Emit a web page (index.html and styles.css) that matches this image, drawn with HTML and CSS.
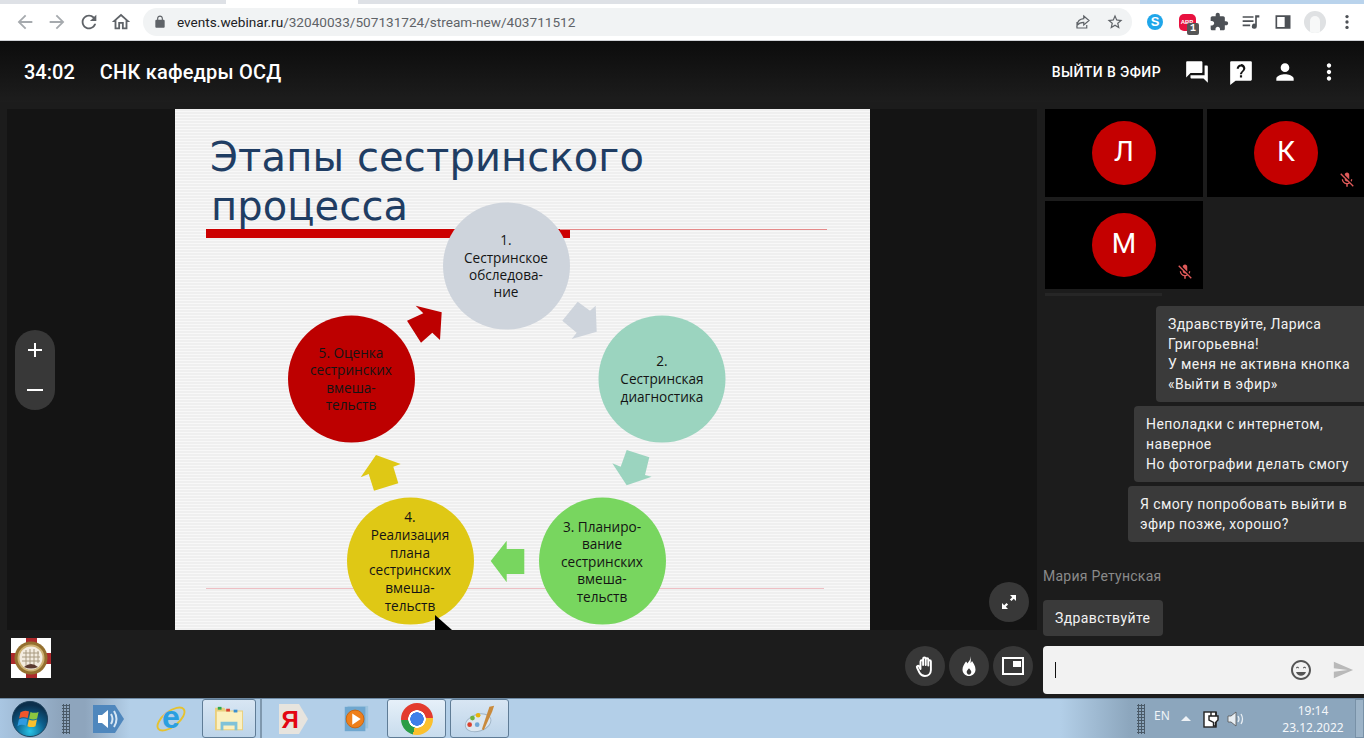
FILE: index.html
```html
<!DOCTYPE html>
<html lang="ru">
<head>
<meta charset="utf-8">
<title>СНК кафедры ОСД</title>
<link rel="stylesheet" href="styles.css">
</head>
<body>
<div class="browser">
  <div class="tabstrip"><span class="tab-a"></span><span class="tab-active"></span><span class="tab-b"></span><span class="tab-desk"></span></div>
  <div class="toolbar">
    <button class="tb-btn off"><svg viewBox="0 0 24 24"><path d="M20 11H7.83l5.59-5.59L12 4l-8 8 8 8 1.41-1.41L7.83 13H20v-2z"/></svg></button>
    <button class="tb-btn off"><svg viewBox="0 0 24 24"><path d="M12 4l-1.41 1.41L16.17 11H4v2h12.17l-5.58 5.59L12 20l8-8z"/></svg></button>
    <button class="tb-btn"><svg viewBox="0 0 24 24"><path d="M17.65 6.35C16.2 4.9 14.21 4 12 4c-4.42 0-7.99 3.58-7.99 8s3.57 8 7.99 8c3.73 0 6.84-2.55 7.73-6h-2.08c-.82 2.33-3.04 4-5.65 4-3.31 0-6-2.69-6-6s2.69-6 6-6c1.66 0 3.14.69 4.22 1.78L13 11h7V4l-2.35 2.35z"/></svg></button>
    <button class="tb-btn"><svg viewBox="0 0 24 24"><path d="M12 5.69l5 4.5V18h-2v-6H9v6H7v-7.81l5-4.5M12 3L2 12h3v8h6v-6h2v6h6v-8h3L12 3z"/></svg></button>
    <div class="omnibox">
      <svg class="lock" viewBox="0 0 24 24"><path d="M18 8h-1V6c0-2.76-2.24-5-5-5S7 3.24 7 6v2H6c-1.1 0-2 .9-2 2v10c0 1.1.9 2 2 2h12c1.1 0 2-.9 2-2V10c0-1.1-.9-2-2-2zM9 6c0-1.66 1.34-3 3-3s3 1.34 3 3v2H9V6z"/></svg>
      <span class="url"><span class="url-host">events.webinar.ru</span>/32040033/507131724/stream-new/403711512</span>
      <svg class="omni-icon share" viewBox="0 0 24 24"><path class="stroke-icon" d="M4 12v8h13v-4M13 4l7 6-7 6v-3.5c-4 0-6.500 1-9 4 .5-5 3.500-8.500 9-9z"/></svg>
      <svg class="omni-icon star" viewBox="0 0 24 24"><path d="M22 9.24l-7.19-.62L12 2 9.19 8.63 2 9.24l5.46 4.73L5.82 21 12 17.27 18.18 21l-1.63-7.03L22 9.24zM12 15.4l-3.76 2.27 1-4.28-3.32-2.88 4.38-.38L12 6.1l1.71 4.04 4.38.38-3.32 2.88 1 4.28L12 15.4z"/></svg>
    </div>
    <div class="ext-row">
      <span class="ext"><span class="skype">S</span></span>
      <span class="ext"><span class="abp">ABP</span><span class="abp-badge">1</span></span>
      <span class="ext"><svg class="ext-svg" viewBox="0 0 24 24"><path d="M20.5 11H19V7c0-1.100-.9-2-2-2h-4V3.500C13 2.120 11.880 1 10.500 1S8 2.120 8 3.500V5H4c-1.100 0-1.990.9-1.990 2v3.800H3.500c1.490 0 2.700 1.210 2.700 2.700s-1.210 2.700-2.700 2.700H2V20c0 1.100.9 2 2 2h3.800v-1.500c0-1.490 1.210-2.700 2.700-2.700 1.490 0 2.700 1.210 2.700 2.700V22H17c1.100 0 2-.9 2-2v-4h1.500c1.380 0 2.500-1.120 2.500-2.500S21.880 11 20.500 11z"/></svg></span>
      <span class="ext"><svg class="ext-svg" viewBox="0 0 24 24"><path d="M2 5h13v2H2zM2 10h13v2H2zM2 15h9v2H2zM17 4h5v2.500h-3V17a3 3 0 1 1-2-2.800z"/></svg></span>
      <span class="ext"><svg class="ext-svg" viewBox="0 0 24 24"><path fill-rule="evenodd" d="M3 4h18v16H3zM5 6v12h9V6z"/></svg></span>
      <span class="ext"><span class="profile"><span class="profile-head"></span></span></span>
      <span class="ext"><svg class="ext-svg" viewBox="0 0 24 24"><circle cx="12" cy="5.500" r="2"/><circle cx="12" cy="12" r="2"/><circle cx="12" cy="18.500" r="2"/></svg></span>
    </div>
  </div>
</div>

<div class="app">
  <header class="header">
    <span class="timer">34:02</span>
    <span class="title">СНК кафедры ОСД</span>
    <span class="go-live">ВЫЙТИ В ЭФИР</span>
    <button class="hd-btn"><svg viewBox="0 0 24 24"><path d="M21 6h-2v9H6v2c0 .55.45 1 1 1h11l4 4V7c0-.55-.45-1-1-1zm-4 6V3c0-.55-.45-1-1-1H3c-.55 0-1 .45-1 1v14l4-4h10c.55 0 1-.45 1-1z"/></svg></button>
    <button class="hd-btn"><svg viewBox="0 0 24 24"><path fill-rule="evenodd" d="M3 2h18a1 1 0 0 1 1 1v16a1 1 0 0 1-1 1H7l-5 4V3a1 1 0 0 1 1-1zm8 13v2h2v-2zm1-10c-2.200 0-4 1.800-4 4h2c0-1.100.9-2 2-2s2 .9 2 2c0 .55-.22 1.050-.59 1.410l-1.240 1.260C11.450 12.400 11 13.400 11 14h2c0-1 .45-1.600 1.170-2.330l.9-.92c.57-.57.93-1.370.93-2.250 0-2.200-1.790-4-4-4z"/></svg></button>
    <button class="hd-btn"><svg viewBox="0 0 24 24"><path d="M12 12c2.210 0 4-1.790 4-4s-1.790-4-4-4-4 1.790-4 4 1.790 4 4 4zm0 2c-2.670 0-8 1.340-8 4v2h16v-2c0-2.660-5.330-4-8-4z"/></svg></button>
    <button class="hd-btn"><svg viewBox="0 0 24 24"><path d="M12 8c1.100 0 2-.9 2-2s-.9-2-2-2-2 .9-2 2 .9 2 2 2zm0 2c-1.100 0-2 .9-2 2s.9 2 2 2 2-.9 2-2-.9-2-2-2zm0 6c-1.100 0-2 .9-2 2s.9 2 2 2 2-.9 2-2-.9-2-2-2z"/></svg></button>
  </header>

  <div class="workspace">
    <main class="main">
      <section class="stage">
        <svg class="slide" viewBox="175 109 695 521">
          <defs>
            <pattern id="stripes" width="3" height="3" patternUnits="userSpaceOnUse">
              <rect width="3" height="3" fill="#f8f8f8"/>
              <rect y="1.500" width="3" height="1" fill="#e6e6e6"/>
            </pattern>
          </defs>
          <rect x="175" y="109" width="695" height="521" fill="url(#stripes)"/>
          <text class="s-title" x="210" y="171" textLength="434">Этапы сестринского</text>
          <text class="s-title" x="211" y="220" textLength="197">процесса</text>
          <rect class="s-red" x="206" y="229" width="364" height="9"/>
          <rect class="s-thin" x="560" y="229" width="267" height="1"/>
          <rect class="s-pink" x="206" y="588" width="618" height="1"/>

          <polygon class="c1" points="577.700,301.700 590,310.700 595.700,305.700 596.700,331.700 571.700,339 576.700,332.700 562.300,320.700"/>
          <polygon class="c2" points="626.700,450 649.300,457.300 645,475 651.700,476.700 626.700,485.300 612.300,463.300 620.700,466.700"/>
          <polygon class="c3" points="490.700,561 506.700,540.700 506.700,549 524.300,549 524.300,574 506.700,574 506.700,582.300"/>
          <polygon class="c4" points="376,455 400.700,464 393.300,466.700 398.300,483.300 374,490.700 368.700,474 360.700,477.300"/>
          <polygon class="c5" points="415.700,305.700 441.700,312.300 440,340 432.300,332.700 421,342.700 407,320.700 423.300,313.300"/>

          <circle class="c1" cx="506.500" cy="266" r="63.500"/>
          <circle class="c2" cx="662" cy="379" r="63.500"/>
          <circle class="c3" cx="602.500" cy="561" r="63.500"/>
          <circle class="c4" cx="410.500" cy="561" r="63.500"/>
          <circle class="c5" cx="351.500" cy="379" r="63.500"/>

          <text class="s-text" x="506" y="245">1.</text>
          <text class="s-text" x="506" y="263">Сестринское</text>
          <text class="s-text" x="506" y="280">обследова-</text>
          <text class="s-text" x="506" y="297">ние</text>

          <text class="s-text" x="662" y="366">2.</text>
          <text class="s-text" x="662" y="384">Сестринская</text>
          <text class="s-text" x="662" y="402">диагностика</text>

          <text class="s-text" x="602" y="532">3. Планиро-</text>
          <text class="s-text" x="602" y="549">вание</text>
          <text class="s-text" x="602" y="567">сестринских</text>
          <text class="s-text" x="602" y="584">вмеша-</text>
          <text class="s-text" x="602" y="602">тельств</text>

          <text class="s-text" x="410" y="522">4.</text>
          <text class="s-text" x="410" y="540">Реализация</text>
          <text class="s-text" x="410" y="558">плана</text>
          <text class="s-text" x="410" y="575">сестринских</text>
          <text class="s-text" x="410" y="593">вмеша-</text>
          <text class="s-text" x="410" y="611">тельств</text>

          <text class="s-text" x="351" y="358">5. Оценка</text>
          <text class="s-text" x="351" y="375">сестринских</text>
          <text class="s-text" x="351" y="393">вмеша-</text>
          <text class="s-text" x="351" y="410">тельств</text>

          <polygon class="s-cursor" points="435,615 435,630 452,630"/>
        </svg>
        <div class="zoom-ctl">
          <svg viewBox="0 0 40 40"><path d="M13 19h14v2H13zM19 13h2v14h-2z"/></svg>
          <svg viewBox="0 0 40 40"><path d="M12 19h16v2H12z"/></svg>
        </div>
        <button class="round fs-btn"><svg viewBox="0 0 24 24"><path d="M13 5h6v6l-2.200-2.200-2.300 2.300-1.600-1.600 2.300-2.300zM11 19H5v-6l2.200 2.200 2.300-2.300 1.600 1.600-2.300 2.300z"/></svg></button>
      </section>
      <div class="bar">
        <svg class="logo" viewBox="0 0 40 40">
          <rect width="40" height="40" fill="#fff"/>
          <rect x="15" y="0" width="11" height="40" fill="#ad2a2c"/>
          <rect x="0" y="15" width="40" height="11" fill="#ad2a2c"/>
          <circle cx="20" cy="20" r="16.500" fill="#94702f"/>
          <circle cx="20" cy="20" r="13.500" fill="#cdb274"/>
          <circle cx="20" cy="20" r="11.500" fill="#f3ece0"/>
          <path class="logo-lines" d="M12 15h16M11 19h18M11 23h18M15 12v16M19 11v17M23 11v17M27 13v12"/>
          <path d="M13 29q7-6 14 0q-7 3-14 0z" fill="#5a3a30"/>
        </svg>
        <div class="bar-actions">
          <button class="round"><svg viewBox="0 0 24 24"><path class="hand" d="M7.500 15V7.500a1.300 1.300 0 0 1 2.600 0V11V4.800a1.300 1.300 0 0 1 2.600 0V11V5.500a1.300 1.300 0 0 1 2.600 0V11.500V7.500a1.300 1.300 0 0 1 2.600 0V16c0 3.500-2.500 6-6 6c-3 0-4.300-1.300-5.500-3.500L4 13.500c-.7-1.300 1-2.400 2-1.200z"/></svg></button>
          <button class="round"><svg viewBox="0 0 24 24"><path fill-rule="evenodd" d="M13 2c1 4-1 5-2.500 7.500C10 8.500 9.500 8 9 7.500 7.500 10 5.500 12 5.500 15.500c0 4 3.200 6.500 6.500 6.500s6.500-2.500 6.500-6.500c0-4-2.500-6.500-3.500-8.500-.5 1-1 1.500-1.500 2C14 7 14 4 13 2zM12 20.500c-1.200 0-2.300-1.100-2.300-2.600 0-1.200 1.100-2.200 2.300-3.700 1.200 1.500 2.300 2.500 2.300 3.700 0 1.500-1.100 2.600-2.300 2.600z"/></svg></button>
          <button class="round"><svg viewBox="0 0 24 24"><path fill-rule="evenodd" d="M1 3h22v18H1zM3 5v14h18V5zM12 7h8v6h-8z"/></svg></button>
        </div>
      </div>
    </main>

    <aside class="side">
      <div class="tiles">
        <div class="tile"><span class="avatar">Л</span></div>
        <div class="tile"><span class="avatar">К</span><svg class="mic" viewBox="0 0 24 24"><path d="M19 11h-1.700c0 .74-.16 1.430-.43 2.050l1.230 1.230c.56-.98.9-2.090.9-3.280zm-4.020.17c0-.06.02-.11.02-.17V5c0-1.660-1.340-3-3-3S9 3.340 9 5v.18l5.980 5.990zM4.270 3L3 4.270l6.010 6.010V11c0 1.660 1.330 3 2.990 3 .22 0 .44-.03.65-.08l1.660 1.660c-.71.33-1.500.52-2.310.52-2.760 0-5.300-2.100-5.300-5.100H5c0 3.410 2.720 6.230 6 6.720V21h2v-3.280c.91-.13 1.770-.45 2.540-.9L19.730 21 21 19.730 4.270 3z"/></svg></div>
        <div class="tile"><span class="avatar">М</span><svg class="mic" viewBox="0 0 24 24"><path d="M19 11h-1.700c0 .74-.16 1.430-.43 2.050l1.230 1.230c.56-.98.9-2.090.9-3.280zm-4.020.17c0-.06.02-.11.02-.17V5c0-1.660-1.340-3-3-3S9 3.340 9 5v.18l5.980 5.990zM4.270 3L3 4.270l6.010 6.010V11c0 1.660 1.330 3 2.990 3 .22 0 .44-.03.65-.08l1.660 1.660c-.71.33-1.500.52-2.310.52-2.760 0-5.300-2.100-5.300-5.100H5c0 3.410 2.720 6.230 6 6.720V21h2v-3.280c.91-.13 1.770-.45 2.540-.9L19.730 21 21 19.730 4.270 3z"/></svg></div>
      </div>
      <div class="tiles-scroll"></div>
      <div class="chat">
        <div class="bubble own b1">Здравствуйте, Лариса<br>Григорьевна!<br>У меня не активна кнопка<br>«Выйти в эфир»</div>
        <div class="bubble own b2">Неполадки с интернетом,<br>наверное<br>Но фотографии делать смогу</div>
        <div class="bubble own b3">Я смогу попробовать выйти в<br>эфир позже, хорошо?</div>
        <div class="author">Мария Ретунская</div>
        <div class="bubble other">Здравствуйте</div>
      </div>
      <div class="composer">
        <span class="caret"></span>
        <svg class="smile" viewBox="0 0 24 24"><path d="M11.990 2C6.470 2 2 6.480 2 12s4.470 10 9.990 10C17.520 22 22 17.520 22 12S17.520 2 11.990 2zM12 20c-4.420 0-8-3.580-8-8s3.580-8 8-8 8 3.580 8 8-3.580 8-8 8z"/><path d="M7 14h10c-.7 2.300-2.700 3.800-5 3.800S7.700 16.300 7 14zM7 10c.3-1.700 2.700-1.700 3 0l-.7.500c-.4-.9-1.200-.9-1.600 0zM14 10c.3-1.700 2.700-1.700 3 0l-.7.500c-.4-.9-1.200-.9-1.600 0z"/></svg>
        <svg class="send" viewBox="0 0 24 24"><path d="M2.010 21L23 12 2.010 3 2 10l15 2-15 2z"/></svg>
      </div>
    </aside>
  </div>
</div>

<footer class="taskbar">
  <div class="start">
    <svg viewBox="0 0 40 40">
      <defs>
        <radialGradient id="orb" cx="50%" cy="85%" r="75%"><stop offset="0" stop-color="#27c3e6"/><stop offset=".55" stop-color="#0d5f8c"/><stop offset="1" stop-color="#0b2f4c"/></radialGradient>
      </defs>
      <circle cx="20" cy="20" r="18.500" fill="url(#orb)" stroke="#1c3f5a"/>
      <path d="M10 13q4-3 9-1l-1.500 7q-5-2-9 .5z" fill="#f0562a"/>
      <path d="M20.500 12.500q4 2 8.500 0l-1.500 7q-4 2-8.500 0z" fill="#8cc63f"/>
      <path d="M8.300 20.500q4-2.500 9 -.5l-1.500 7q-5-2-9 .5z" fill="#2f9be0"/>
      <path d="M18.800 20.500q4 2 8.500 0l-1.500 7q-4 2-8.500 0z" fill="#fbc02d"/>
    </svg>
  </div>
  <div class="grip"></div>
  <div class="slot slot-sound">
    <svg viewBox="0 0 32 30"><path d="M1 1h22l9 14-9 14H1z" fill="#4f87bd"/><path d="M6 11h4l6-5v18l-6-5H6z" fill="#fff"/><path class="wave" d="M19 10q3 5 0 10M22 7q5 8 0 16"/></svg>
  </div>
  <div class="slot slot-ie">
    <svg viewBox="0 0 36 36"><ellipse class="ie-ring" cx="18" cy="18" rx="17" ry="8" transform="rotate(-38 18 18)"/><text class="ie-e" x="18" y="28">e</text></svg>
  </div>
  <div class="slot pinned active-soft slot-exp">
    <svg viewBox="0 0 34 30"><path d="M2 3h10l2 3h18v21H2z" fill="#e9cf7d"/><rect x="4" y="7" width="27" height="19" fill="#fbf0c0"/><rect x="5" y="2" width="4" height="3" fill="#2fa84f"/><rect x="14" y="4" width="4" height="3" fill="#d9412e"/><rect x="22" y="5" width="4" height="3" fill="#3b8fd0"/><path d="M8 27V18h18v9h-3v-5H11v5z" fill="#7fc2d8"/></svg>
  </div>
  <div class="sep"></div>
  <div class="slot slot-ya">
    <svg viewBox="0 0 32 32"><path d="M2 1h20l9 15-9 15H2z" fill="#e7e4de"/><text class="ya" x="13" y="25">Я</text></svg>
  </div>
  <div class="slot slot-wmp">
    <svg viewBox="0 0 32 32"><rect x="7" y="2" width="22" height="24" fill="#9cc3de"/><rect x="4" y="3" width="22" height="26" fill="#6fa7cf"/><circle cx="15" cy="16" r="9.500" fill="#ef7f1a" stroke="#c76410"/><path d="M12 10l9 6-9 6z" fill="#fff"/></svg>
  </div>
  <div class="slot pinned active slot-chrome"><span class="chrome-logo"></span></div>
  <div class="slot pinned active-soft slot-paint">
    <svg viewBox="0 0 34 34"><ellipse cx="15" cy="21" rx="14" ry="9" transform="rotate(-18 15 21)" fill="#dce7f0" stroke="#9fb4c6"/><circle cx="6" cy="23" r="2.500" fill="#d9412e"/><circle cx="9" cy="16" r="2.500" fill="#6db33f"/><circle cx="15" cy="13" r="2.500" fill="#eab308"/><circle cx="14" cy="23" r="2.500" fill="#6ea7d6"/><path d="M32 3l-5 1-8 24 2 1 9-20z" fill="#c98a3c"/></svg>
  </div>
  <div class="tray">
    <div class="grip"></div>
    <span class="lang">EN</span>
    <span class="tray-up"></span>
    <svg class="tray-plug" viewBox="0 0 20 20"><rect x="2" y="3" width="12" height="15" fill="#fff" stroke="#222" stroke-width="1.400"/><path d="M9 3v4M14 3v4M7 7h9v4l-2.500 2.500V17h-2v-3.500L7 11z" fill="#fff" stroke="#222" stroke-width="1.400"/></svg>
    <svg class="tray-vol" viewBox="0 0 20 20"><path d="M2 7h3l5-4v14l-5-4H2z" fill="#e8eef3" stroke="#555" stroke-width=".8"/><path class="tray-wave" d="M12 7q2 3 0 6M15 5q3 5 0 10"/></svg>
    <div class="clock"><span>19:14</span><span>23.12.2022</span></div>
    <div class="show-desktop"></div>
  </div>
</footer>
</body>
</html>
```

FILE: styles.css
```css
* { box-sizing: border-box; }
html, body { margin: 0; padding: 0; }
body {
  width: 1364px;
  height: 738px;
  overflow: hidden;
  display: flex;
  flex-direction: column;
  font-family: Roboto, "Noto Sans", sans-serif;
  background: #1c1c1c;
}
button { border: 0; padding: 0; background: none; display: flex; align-items: center; justify-content: center; }

/* browser chrome */
.browser { height: 41px; flex: none; background: #fff; border-bottom: 1px solid #d0d2d6; }
.tabstrip { height: 4px; display: flex; }
.tab-a { width: 226px; background: #dee1e6; }
.tab-active { width: 132px; background: #fff; }
.tab-b { width: 782px; background: #dee1e6; }
.tab-desk { flex: 1; background: #b9d3ec; }
.toolbar { height: 36px; display: flex; align-items: center; padding-left: 9px; }
.tb-btn { width: 32px; height: 32px; flex: none; }
.tb-btn svg { width: 22px; height: 22px; fill: #5f6368; }
.tb-btn.off svg { fill: #a6aaae; }
.omnibox {
  width: 989px; height: 28px; margin-left: 6px; flex: none;
  border-radius: 14px; background: #f1f3f4;
  display: flex; align-items: center; padding-left: 10px;
}
.lock { width: 14px; height: 14px; fill: #5f6368; flex: none; }
.url { margin-left: 10px; font: 13.6px/28px Roboto, sans-serif; color: #5f6368; white-space: nowrap; }
.url-host { color: #202124; }
.omni-icon { width: 18px; height: 18px; flex: none; fill: #5f6368; }
.share { margin-left: auto; }
.star { margin: 0 8px 0 14px; }
.stroke-icon { fill: none; stroke: #5f6368; stroke-width: 1.600; }
.ext-row { display: flex; margin-left: 7px; }
.ext { width: 32px; height: 32px; display: flex; align-items: center; justify-content: center; position: relative; }
.ext-svg { width: 20px; height: 20px; fill: #4d5156; }
.skype { width: 16px; height: 16px; border-radius: 50%; background: #1fa6ea; color: #fff; font: 700 13px/16px "Liberation Sans", sans-serif; text-align: center; }
.abp { width: 17px; height: 17px; border-radius: 5px; background: #e8113f; color: #fff; font: 700 6px/17px "Liberation Sans", sans-serif; text-align: center; }
.abp-badge { position: absolute; right: 4px; bottom: 3px; width: 12px; height: 12px; border-radius: 2px; background: #555; color: #fff; font: 700 10px/12px "Liberation Mono", monospace; text-align: center; }
.profile { width: 22px; height: 22px; border-radius: 50%; background: #dfe1e3; display: flex; justify-content: center; align-items: flex-end; overflow: hidden; }
.profile-head { width: 10px; height: 17px; border-radius: 5px 5px 2px 2px; background: #f7f8f8; }

/* app */
.app { flex: 1; display: flex; flex-direction: column; min-height: 0; background: #1c1c1c; }
.header {
  height: 61px; flex: none; display: flex; align-items: center;
  padding: 0 13px 0 24px; color: #fff;
  background: linear-gradient(#0c0c0c, #1d1d1d);
}
.timer { font-size: 20px; font-weight: 500; }
.title { font-size: 20px; font-weight: 500; margin-left: 25px; letter-spacing: .2px; }
.go-live { margin-left: auto; margin-right: 14px; font-size: 14px; font-weight: 500; letter-spacing: .42px; }
.hd-btn { width: 44px; height: 44px; }
.hd-btn svg { width: 26px; height: 26px; fill: #fff; }

.workspace { flex: 1; display: flex; min-height: 0; padding-top: 7px; }
.main { width: 1037px; flex: none; padding-left: 7px; display: flex; flex-direction: column; }
.stage { height: 521px; flex: none; position: relative; background: #141414; display: flex; justify-content: center; }
.slide { width: 695px; height: 521px; display: block; }
.s-title { font-family: "DejaVu Sans", sans-serif; font-size: 40px; fill: #1f3d63; }
.s-text { font-family: "Open Sans", "Noto Sans", sans-serif; font-size: 13.6px; fill: #141414; text-anchor: middle; }
.s-red { fill: #cc0000; }
.s-thin { fill: #e58a8a; }
.s-pink { fill: #eebfc4; }
.c1 { fill: #ced4dc; }
.c2 { fill: #9bd4bf; }
.c3 { fill: #78d65f; }
.c4 { fill: #dfc815; }
.c5 { fill: #bd0000; }
.s-cursor { fill: #000; }
.zoom-ctl {
  position: absolute; left: 8px; top: 221px; width: 40px; height: 80px;
  border-radius: 20px; background: #383838;
}
.zoom-ctl svg { display: block; width: 40px; height: 40px; fill: #fff; }
.round { width: 40px; height: 40px; border-radius: 50%; background: #383838; flex: none; }
.round svg { width: 24px; height: 24px; fill: #fff; }
.fs-btn { position: absolute; right: 8px; top: 473px; }
.hand { fill: none; stroke: #fff; stroke-width: 1.900; stroke-linejoin: round; stroke-linecap: round; }
.bar { flex: 1; display: flex; align-items: flex-start; padding: 8px 4px 0 4px; }
.logo { width: 40px; height: 40px; flex: none; }
.logo-lines { fill: none; stroke: #a89a80; stroke-width: 1; }
.bar-actions { margin-left: auto; margin-top: 8px; display: flex; gap: 4px; }

/* side */
.side { flex: 1; min-width: 0; display: flex; flex-direction: column; overflow: hidden; }
.tiles { display: grid; grid-template-columns: 158px 158px; grid-auto-rows: 88px; gap: 4px; padding-left: 8px; width: 340px; }
.tile { background: #000; display: flex; align-items: center; justify-content: center; position: relative; }
.avatar {
  width: 64px; height: 64px; border-radius: 50%; background: #c40000; color: #fff;
  font-size: 28px; line-height: 62px; text-align: center;
}
.mic { position: absolute; right: 9px; bottom: 8px; width: 18px; height: 18px; fill: #e05a5a; }
.tiles-scroll { width: 117px; height: 3px; margin: 4px 0 0 8px; background: #262626; flex: none; }
.chat { flex: 1; display: flex; flex-direction: column; align-items: flex-end; gap: 4px; padding-top: 10px; }
.bubble {
  padding: 8px 12px; border-radius: 4px 0 0 4px; background: #3a3a3a; color: #f2f2f2;
  font-size: 14px; line-height: 20px; letter-spacing: .4px; white-space: nowrap;
}
.b1 { width: 208px; }
.b2 { width: 230px; }
.b3 { width: 236px; }
.author { align-self: flex-start; margin: 20px 0 0 6px; color: #8a8a8a; font-size: 14px; line-height: 20px; letter-spacing: .25px; }
.bubble.other { align-self: flex-start; margin: 10px 0 0 6px; width: 120px; border-radius: 4px; }
.composer {
  height: 48px; flex: none; margin: 0 0 4px 6px; background: #f2f2f2; border-radius: 4px 0 0 4px;
  display: flex; align-items: center; padding-left: 12px;
}
.caret { width: 1px; height: 16px; background: #111; }
.smile { margin-left: auto; width: 24px; height: 24px; fill: #555; }
.send { margin: 0 10px 0 19px; width: 22px; height: 22px; fill: #b9b9b9; }

/* taskbar */
.taskbar {
  height: 40px; flex: none; display: flex; align-items: center;
  border-top: 1px solid #6f8aa3;
  background: linear-gradient(90deg, #a9c6e2 0, #8ea5bd 60px, #8ea5bd 85px, #b3cfe8 130px, #b3cfe8 1060px, #8ca6bd 1130px, #8ca6bd 100%);
}
.start { width: 60px; flex: none; display: flex; justify-content: center; }
.start svg { width: 38px; height: 38px; }
.grip {
  width: 8px; height: 30px; flex: none; margin-left: 2px;
  background: radial-gradient(circle at 1.500px 1.500px, #4a5a68 1.100px, transparent 1.300px) 0 0 / 3px 3px;
}
.slot { height: 39px; flex: none; display: flex; align-items: center; justify-content: center; }
.slot-sound { width: 48px; margin-left: 14px; }
.slot-sound svg { width: 32px; height: 30px; }
.wave { fill: none; stroke: #d6e6f4; stroke-width: 2; }
.slot-ie { width: 48px; margin-left: 15px; }
.slot-ie svg { width: 34px; height: 34px; }
.ie-ring { fill: none; stroke: #e6c22e; stroke-width: 2; }
.ie-e { font: 700 34px/1 "Liberation Sans", sans-serif; fill: #2a9fe0; text-anchor: middle; }
.slot-exp { width: 54px; margin-left: 7px; }
.slot-exp svg { width: 32px; height: 28px; }
.sep { width: 2px; height: 39px; margin-left: 4px; background: #7f98ae; flex: none; }
.slot-ya { width: 48px; margin-left: 7px; }
.slot-ya svg { width: 32px; height: 32px; }
.ya { font: 700 24px/1 "Liberation Sans", sans-serif; fill: #e30613; text-anchor: middle; }
.slot-wmp { width: 48px; margin-left: 15px; }
.slot-wmp svg { width: 30px; height: 30px; }
.slot-chrome { width: 59px; margin-left: 7px; }
.slot-paint { width: 59px; margin-left: 4px; }
.slot-paint svg { width: 32px; height: 32px; }
.pinned { border: 1px solid #5f7c96; border-radius: 3px; }
.active { background: linear-gradient(#e6f0f9, #c8dced); }
.active-soft { background: linear-gradient(#d8e6f3, #bdd4e9); }
.chrome-logo {
  width: 32px; height: 32px; border-radius: 50%;
  background:
    radial-gradient(circle, #3f7fe8 0 6.500px, #fff 7px 8.500px, transparent 9px),
    conic-gradient(#e33b2e 0 85deg, #fbc02d 85deg 195deg, #2a9d47 195deg 265deg, #e33b2e 265deg);
}
.tray { margin-left: auto; display: flex; align-items: center; color: #fff; }
.lang { margin-left: 9px; width: 16px; font: 12px "Noto Sans", sans-serif; margin-bottom: 6px; color: #f0f4f8; }
.tray-up { margin-left: 11px; width: 0; height: 0; border: 5px solid transparent; border-top: 0; border-bottom-color: #eef2f6; }
.tray-plug { margin-left: 11px; width: 20px; height: 20px; }
.tray-vol { margin-left: 4px; width: 20px; height: 20px; }
.tray-wave { fill: none; stroke: #e8eef3; stroke-width: 1.300; }
.clock { margin-left: 32px; width: 70px; display: flex; flex-direction: column; align-items: center; font: 12px/17px "Noto Sans", sans-serif; color: #f4f7fa; }
.show-desktop { margin-left: 7px; width: 9px; height: 39px; border: 1px solid #7891a7; background: #9db4c8; }
```
